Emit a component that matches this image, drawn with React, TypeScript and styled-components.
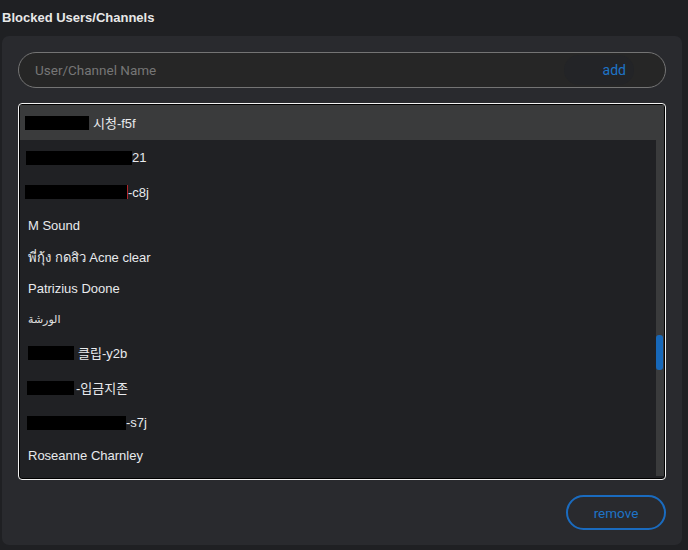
import React from "react";
import styled, { createGlobalStyle } from "styled-components";

const Global = createGlobalStyle`
  html, body { margin: 0; padding: 0; background: #1f2023; }
  body { font-family: "Liberation Sans", Arial, sans-serif; }
  * { box-sizing: border-box; }
`;

const Page = styled.div`
  width: 688px;
  height: 550px;
  padding: 10px 6px 5px 2px;
  display: flex;
  flex-direction: column;
  background: #1f2023;
`;

const Title = styled.h2`
  margin: 0 0 10px 0;
  height: 16px;
  line-height: 16px;
  font-size: 13px;
  font-weight: 700;
  color: #e8e8e8;
  font-family: "Liberation Sans", Arial, sans-serif;
`;

const Panel = styled.section`
  flex: 1;
  background: #292a2e;
  border-radius: 7px;
  padding: 16px 16px 15px 16px;
  display: flex;
  flex-direction: column;
  gap: 15px;
`;

const InputBar = styled.div`
  height: 36px;
  border: 1px solid #747474;
  border-radius: 18px;
  background: #262626;
  display: flex;
  align-items: stretch;
  overflow: hidden;
`;

const NameInput = styled.input`
  flex: 1;
  min-width: 0;
  border: none;
  outline: none;
  background: transparent;
  padding: 0 0 0 16px;
  font-family: Roboto, "Liberation Sans", sans-serif;
  font-size: 13.5px;
  color: #ddd;
  &::placeholder { color: #767676; }
`;

const AddButton = styled.button`
  width: 70px;
  margin: 2px 31px 2px 0;
  border: none;
  border-radius: 16px;
  background: #232427;
  color: #1e74c8;
  font-family: Roboto, "Liberation Sans", sans-serif;
  font-size: 14px;
  text-align: right;
  padding: 0 8px 0 0;
  cursor: pointer;
`;

const ListFrame = styled.div`
  height: 377px;
  border: 1px solid #f2f2f2;
  border-radius: 4px;
  box-shadow: inset 0 0 0 1px #000;
  padding: 1px;
  display: grid;
  grid-template-columns: 1fr 8px;
  overflow: hidden;
  background: #202124;
`;

const Rows = styled.ul`
  list-style: none;
  margin: 0;
  padding: 0;
  overflow: hidden;
`;

const Row = styled.li<{ $h: number; $selected?: boolean }>`
  height: ${(p) => p.$h}px;
  display: flex;
  align-items: center;
  padding-left: 8px;
  background: ${(p) => (p.$selected ? "#3a3b3c" : "transparent")};
  color: #e8eaed;
  font-size: 13px;
  font-family: "Liberation Sans", Arial, "Noto Sans CJK KR", "DejaVu Sans", sans-serif;
  white-space: nowrap;
`;

const Redact = styled.span<{ $w: number; $shift?: number }>`
  display: inline-block;
  width: ${(p) => p.$w}px;
  height: 14px;
  background: #000;
  margin-left: ${(p) => p.$shift ?? 0}px;
`;

const RedLine = styled.span`
  display: inline-block;
  width: 1px;
  height: 14px;
  background: #b0262a;
`;

const Seg = styled.span<{ $gap?: number }>`
  margin-left: ${(p) => p.$gap ?? 0}px;
`;

const Small = styled.span`
  font-size: 11px;
  font-family: "DejaVu Sans", sans-serif;
  color: #e0e0e0;
`;

const Track = styled.div`
  background: #3a3b3c;
  position: relative;
  margin-bottom: 2px;
`;

const Thumb = styled.div`
  position: absolute;
  left: 0;
  right: 1px;
  top: 230px;
  height: 35px;
  border-radius: 3px;
  background: #1768b9;
`;

const Footer = styled.div`
  display: flex;
  justify-content: flex-end;
`;

const RemoveButton = styled.button`
  width: 100px;
  height: 35px;
  border: 2px solid #1a6bbf;
  border-radius: 18px;
  background: transparent;
  color: #1e74c8;
  font-family: Roboto, "Liberation Sans", sans-serif;
  font-size: 13.5px;
  cursor: pointer;
`;

export default function App() {
  return (
    <>
      <Global />
      <Page>
        <Title>Blocked Users/Channels</Title>
        <Panel>
          <InputBar>
            <NameInput placeholder="User/Channel Name" />
            <AddButton>add</AddButton>
          </InputBar>
          <ListFrame>
            <Rows>
              <Row $h={35} $selected>
                <Redact $w={64} $shift={-3} />
                <Seg $gap={4}>시청-f5f</Seg>
              </Row>
              <Row $h={35}>
                <Redact $w={106} $shift={-2} />
                <Seg>21</Seg>
              </Row>
              <Row $h={34}>
                <Redact $w={102} $shift={-3} />
                <RedLine />
                <Seg>-c8j</Seg>
              </Row>
              <Row $h={32}>M Sound</Row>
              <Row $h={32}>พี่กุ้ง กดสิว Acne clear</Row>
              <Row $h={31}>Patrizius Doone</Row>
              <Row $h={31}>
                <Small>الورشة</Small>
              </Row>
              <Row $h={35}>
                <Redact $w={46} />
                <Seg $gap={4}>클립-y2b</Seg>
              </Row>
              <Row $h={35}>
                <Redact $w={47} $shift={-1} />
                <Seg $gap={2}>-입금지존</Seg>
              </Row>
              <Row $h={35}>
                <Redact $w={99} $shift={-1} />
                <Seg>-s7j</Seg>
              </Row>
              <Row $h={31}>Roseanne Charnley</Row>
            </Rows>
            <Track>
              <Thumb />
            </Track>
          </ListFrame>
          <Footer>
            <RemoveButton>remove</RemoveButton>
          </Footer>
        </Panel>
      </Page>
    </>
  );
}
